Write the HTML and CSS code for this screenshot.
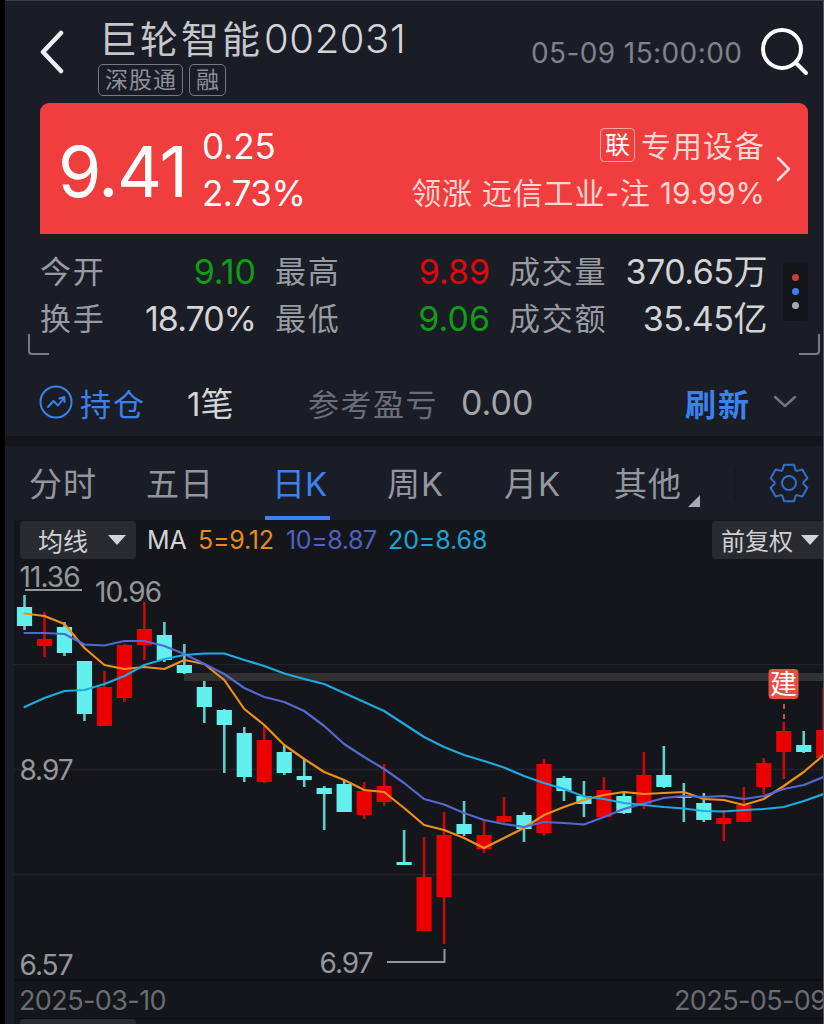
FILE: index.html
```
<!DOCTYPE html>
<html lang="zh-CN">
<head>
    <meta charset="UTF-8">
    <meta name="viewport" content="width=device-width, initial-scale=1.0">
    <title>巨轮智能 002031</title>
    <link rel="stylesheet" href="styles.css">
</head>
<body>
    <div class="app">
        <header class="top-bar">
            <svg class="back" width="26" height="44" viewBox="0 0 26 44"><path d="M22 3 L4 22 L22 41" /></svg>
            <div class="title">
                <h1>巨轮智能<span class="code">002031</span></h1>
                <div class="tags">
                    <span>深股通</span>
                    <span>融</span>
                </div>
            </div>
            <span class="time">05-09 15:00:00</span>
            <svg class="search" width="50" height="50" viewBox="0 0 50 50"><circle cx="22" cy="22" r="19" /><path d="M36 36 L46 46" /></svg>
        </header>

        <section class="price-card">
            <span class="price">9.41</span>
            <div class="change">
                <span>0.25</span>
                <span class="percent">2.73%</span>
            </div>
            <div class="sector">
                <div class="sector-name"><span class="link-tag">联</span><span>专用设备</span></div>
                <div class="leader">领涨 远信工业-注 <span class="leader-rate">19.99%</span></div>
            </div>
            <svg class="arrow" width="16" height="28" viewBox="0 0 16 28"><path d="M2 3 L13 14 L2 25" /></svg>
        </section>

        <section class="stats">
            <div class="grid">
                <div class="cell"><span>今开</span><b class="green">9.10</b></div>
                <div class="cell"><span>最高</span><b class="red">9.89</b></div>
                <div class="cell"><span>成交量</span><b class="tight">370.65万</b></div>
                <div class="cell"><span>换手</span><b class="tighter">18.70%</b></div>
                <div class="cell"><span>最低</span><b class="green">9.06</b></div>
                <div class="cell"><span>成交额</span><b class="tight">35.45亿</b></div>
            </div>
            <div class="dots"><i class="d1"></i><i class="d2"></i><i class="d3"></i></div>
        </section>
        <div class="corners"><i class="left"></i><i class="right"></i></div>

        <section class="position">
            <svg class="pos-icon" width="34" height="34" viewBox="0 0 34 34">
                <circle cx="17" cy="17" r="15.5" />
                <path d="M9 22 L14.5 16 L19 20.5 L25 13 M20.5 13.5 L25.3 12 L25.5 17" />
            </svg>
            <span class="hold">持仓</span>
            <span class="count">1笔</span>
            <span class="profit-label">参考盈亏</span>
            <span class="profit">0.00</span>
            <span class="refresh">刷新</span>
            <svg class="expand" width="24" height="14" viewBox="0 0 24 14"><path d="M2 2 L12 11 L22 2" /></svg>
        </section>

        <nav class="tabs">
            <span>分时</span>
            <span class="five">五日</span>
            <span class="active">日K</span>
            <span>周K</span>
            <span class="month">月K</span>
            <span class="more">其他</span>
            <svg class="corner-mark" width="12" height="12" viewBox="0 0 12 12"><path d="M12 0 V12 H0 Z" /></svg>
            <i class="sep"></i>
            <svg class="gear" width="40" height="40" viewBox="-20 -20 40 40">
                <path d="M-6.5 -13 L-5 -18.3 H5 L6.5 -13 Q7 -12.2 8 -12.1 L13.35 -13.5 L18.35 -4.8 L14.5 -.9 Q14 0 14.5 .9 L18.35 4.8 L13.35 13.5 L8 12.1 Q7 12.2 6.5 13 L5 18.3 H-5 L-6.5 13 Q-7 12.2 -8 12.1 L-13.35 13.5 L-18.35 4.8 L-14.5 .9 Q-14 0 -14.5 -.9 L-18.35 -4.8 L-13.35 -13.5 L-8 -12.1 Q-7 -12.2 -6.5 -13 Z" />
                <circle r="7" />
            </svg>
        </nav>

        <main class="panel">
            <div class="legend">
                <div class="select">均线<i class="caret"></i></div>
                <span class="ma">MA</span>
                <span class="ma5">5=9.12</span>
                <span class="ma10">10=8.87</span>
                <span class="ma20">20=8.68</span>
                <div class="select adjust">前复权<i class="caret"></i></div>
            </div>

            <svg class="chart" width="809" height="420" viewBox="14 559 809 420">
                <path class="grid-line" d="M14 664.5 H824 M14 769.5 H824 M14 874.5 H824" />
                <rect class="band" x="184" y="673" width="640" height="8" />
                <g class="labels">
                    <text x="19.5" y="587" textLength="61">11.36</text>
                    <text x="95" y="602" textLength="67">10.96</text>
                    <text x="19.5" y="780" textLength="54">8.97</text>
                    <text x="19.5" y="975" textLength="54">6.57</text>
                    <text x="319.5" y="973" textLength="54">6.97</text>
                </g>
                <path class="label-line" d="M25 590 H82 M387 962 H444.5 V949" />
                <g id="candles"></g>
                <polyline id="ma5" class="line line5" />
                <polyline id="ma10" class="line line10" />
                <polyline id="ma20" class="line line20" />
                <path class="mark-line" d="M784 704 V719" />
                <rect class="mark" x="768.5" y="669" width="30" height="30" rx="4" />
                <text class="mark-text" x="783.5" y="694" text-anchor="middle">建</text>
            </svg>

            <div class="dates">
                <span>2025-03-10</span>
                <span class="end">2025-05-09</span>
            </div>
            <div class="next"><div class="next-select"></div></div>
        </main>
    </div>

    <script>
        // body top, body bottom, wick top, wick bottom, up (1) or down (0)
        var days = [
            [607, 626, 595, 630, 0], [639, 646, 612, 657, 1], [627, 653, 622, 656, 0], [661, 714, 661, 721, 0],
            [687, 726, 671, 726, 1], [645, 698, 644, 702, 1], [629, 645, 602, 660, 1], [635, 660, 622, 662, 0],
            [665, 673, 644, 674, 0], [687, 707, 681, 723, 0], [710, 725, 709, 773, 0], [733, 777, 727, 782, 0],
            [740, 782, 726, 783, 1], [752, 773, 745, 775, 0], [776, 780, 759, 787, 0], [788, 794, 786, 830, 0],
            [784, 812, 780, 812, 0], [791, 815, 782, 819, 1], [786, 802, 764, 806, 1], [862, 865, 830, 865, 0],
            [877, 931, 837, 931, 1], [835, 897, 812, 944, 1], [824, 834, 801, 836, 0], [835, 849, 821, 853, 1],
            [816, 822, 797, 823, 1], [815, 829, 812, 842, 0], [764, 833, 759, 836, 1], [778, 791, 776, 801, 0],
            [796, 804, 781, 817, 0], [790, 817, 777, 817, 1], [796, 813, 793, 814, 0], [775, 804, 752, 809, 1],
            [775, 787, 746, 788, 0], [796, 798, 783, 822, 0], [803, 820, 793, 822, 0], [818, 824, 810, 841, 1],
            [805, 822, 787, 822, 1], [763, 787, 758, 794, 1], [731, 752, 722, 779, 1], [745, 752, 731, 753, 0],
            [730, 758, 688, 758, 1]
        ];
        var lines = {
            ma5: [613.5, 616, 624, 648, 665, 669, 667, 669, 660, 664, 680, 709, 725, 745, 759, 772, 780, 790, 792, 808, 825, 830, 838, 848, 838, 828, 815, 807, 800, 795, 792, 794, 793, 792, 799, 800, 805, 799, 786, 772, 755],
            ma10: [633, 633, 634, 644.5, 645.5, 641, 641, 646, 654, 664, 674, 688, 697, 702, 711, 726, 744, 757, 769, 783, 799, 804.5, 813, 820, 824, 827, 822, 823, 824.5, 817, 809, 803.5, 798, 796, 797, 796, 799, 796, 789, 785, 777],
            ma20: [707, 698, 691, 690, 684, 676, 665, 659, 655, 653.5, 653.5, 660, 666, 673.5, 679, 684, 693, 702, 711, 724, 737, 747, 755, 761, 767.5, 776, 783, 789, 796.5, 799, 803, 805, 807, 808.5, 811, 811.5, 810, 809, 807, 801, 794]
        };

        function dayX(i) {
            return 24.5 + i * 19.98;
        }

        var html = '';
        days.forEach(function (d, i) {
            var x = dayX(i);
            html += `<g class="${d[4] ? 'up' : 'down'}">
                <rect class="wick" x="${x - 1.3}" y="${d[2]}" width="2.6" height="${d[3] - d[2]}" />
                <rect x="${x - 7.6}" y="${d[0]}" width="15.2" height="${d[1] - d[0]}" />
            </g>`;
        });
        document.getElementById('candles').innerHTML = html;

        for (var id in lines) {
            var points = lines[id].map(function (y, i) {
                return dayX(i) + ',' + y;
            });
            document.getElementById(id).setAttribute('points', points.join(' '));
        }
    </script>
</body>
</html>
```
FILE: styles.css
```
* {
    box-sizing: border-box;
}

body {
    margin: 0;
    background-color: #000;
    font-family: Inter, "Noto Sans CJK SC", sans-serif;
    font-weight: 400;
    color: #d3d4d6;
    overflow: hidden;
}

svg {
    display: block;
    flex-shrink: 0;
    fill: none;
    stroke-linecap: round;
    stroke-linejoin: round;
}

span {
    white-space: nowrap;
}

.app {
    width: 819px;
    height: 1024px;
    margin-left: 5px;
    background-color: #1b1d26;
    border-top: 1px solid #3a3d45;
    border-right: 1px solid #55575e;
    overflow: hidden;
}

/* header */
.top-bar {
    display: flex;
    height: 102px;
    padding-left: 34px;
}

.back {
    margin-top: 29px;
    stroke: #eceef2;
    stroke-width: 4.5;
}

.title {
    width: 466px;
    padding: 13px 0 0 33px;
}

.title h1 {
    margin: 0;
    height: 50px;
    padding-left: 1px;
    line-height: 50px;
    font-size: 38px;
    font-weight: 400;
    letter-spacing: 3px;
    white-space: nowrap;
    color: #c6c7ca;
}

.title .code {
    margin-left: 1px;
    font-size: 40px;
    font-weight: 300;
    letter-spacing: 0.6px;
    color: #d3d4d6;
}

.tags {
    display: flex;
    gap: 6px;
}

.tags span {
    height: 32px;
    padding: 0 5px 0 6px;
    border: 1px solid #777a82;
    border-radius: 5px;
    line-height: 31px;
    font-size: 23px;
    letter-spacing: 1px;
    color: #8d9097;
}

.time {
    margin-top: 34px;
    line-height: 36px;
    font-size: 28px;
    letter-spacing: 0.4px;
    color: #7f828a;
}

.search {
    margin: 26px 13px 0 auto;
    stroke: #fff;
    stroke-width: 4;
}

/* red price card */
.price-card {
    display: flex;
    width: 768px;
    height: 131px;
    margin-left: 35px;
    background-color: #ef3e3d;
    border-radius: 9px 9px 0 0;
    color: #fff;
}

.price {
    width: 162px;
    padding-left: 18px;
    line-height: 137px;
    font-size: 70px;
    letter-spacing: -1.4px;
}

.change {
    display: flex;
    flex-direction: column;
    padding-top: 20px;
    line-height: 47px;
    font-size: 35px;
}

.percent {
    letter-spacing: -0.6px;
}

.sector {
    margin-left: auto;
    padding-top: 20px;
    text-align: right;
    font-size: 30px;
    letter-spacing: 1px;
    color: #ffd6d2;
}

.sector-name {
    display: flex;
    justify-content: flex-end;
    gap: 6px;
    height: 47px;
    line-height: 46px;
}

.link-tag {
    width: 35px;
    height: 34px;
    margin-top: 5px;
    border: 1px solid #f9a5a0;
    border-radius: 4px;
    line-height: 33px;
    text-align: center;
    font-size: 25px;
    letter-spacing: 0;
    color: #fff;
}

.leader {
    line-height: 46px;
    letter-spacing: 0.8px;
}

.leader-rate {
    letter-spacing: 0;
}

.arrow {
    margin: 52px 16px 0 11px;
    stroke: #ffe0dd;
    stroke-width: 2.5;
}

/* day stats */
.stats {
    display: flex;
    height: 93px;
    margin-top: 14px;
    padding-left: 35px;
}

.grid {
    display: grid;
    grid-template-columns: 216px 215px 258px;
    column-gap: 19px;
    grid-auto-rows: 47px;
}

.cell {
    display: flex;
    justify-content: space-between;
    line-height: 47px;
    font-size: 31px;
}

.cell span {
    letter-spacing: 1.7px;
    color: #999ba3;
}

.cell b {
    font-size: 34px;
    font-weight: 400;
}

.cell .tight {
    letter-spacing: -0.5px;
}

.cell .tighter {
    letter-spacing: -1px;
}

.cell .green {
    color: #0f9d14;
}

.cell .red {
    color: #e00808;
}

.dots {
    display: flex;
    flex-direction: column;
    align-items: center;
    justify-content: center;
    gap: 7px;
    width: 25px;
    height: 59px;
    margin: 14px 0 0 16px;
    background-color: #14151b;
    border-radius: 3px;
}

.dots i {
    width: 7px;
    height: 7px;
    border-radius: 50%;
}

.d1 { background-color: #c9402f; }
.d2 { background-color: #3b82f0; }
.d3 { background-color: #a9abb0; }

.corners {
    display: flex;
    justify-content: space-between;
    margin: -7px 3px 0 23px;
}

.corners i {
    width: 21px;
    height: 21px;
    border-bottom: 2px solid #777a81;
}

.corners .left {
    border-left: 2px solid #777a81;
    border-bottom-left-radius: 4px;
}

.corners .right {
    border-right: 2px solid #777a81;
    border-bottom-right-radius: 4px;
}

/* position row */
.position {
    display: flex;
    align-items: center;
    height: 81px;
    padding: 13px 0 0 34px;
    font-size: 31px;
}

.pos-icon {
    stroke: #3b82f0;
    stroke-width: 2;
    margin-right: 7px;
}

.hold {
    width: 107px;
    letter-spacing: 2px;
    color: #3b82f0;
}

.count {
    width: 121px;
    font-size: 33px;
}

.profit-label {
    width: 153px;
    letter-spacing: 1.5px;
    color: #6b6e76;
}

.profit {
    font-size: 34px;
    color: #a3a5a9;
}

.refresh {
    margin-left: auto;
    font-weight: 700;
    letter-spacing: 2px;
    color: #3b82f0;
}

.expand {
    margin: 0 26px 0 22px;
    stroke: #70737a;
    stroke-width: 2.5;
}

/* period tabs */
.tabs {
    display: flex;
    height: 84px;
    padding-left: 24px;
    border-top: 10px solid #13151a;
    line-height: 76px;
    font-size: 33px;
    letter-spacing: 0.9px;
    color: #94969e;
}

.tabs span {
    width: 117px;
}

.tabs .five {
    width: 120px;
}

.tabs .active {
    width: 65px;
    margin: 0 57px 0 -1px;
    padding-left: 7px;
    border-bottom: 4px solid #3b82f0;
    letter-spacing: 0;
    color: #3b82f0;
}

.tabs .month {
    width: 110px;
}

.tabs .more {
    width: 74px;
}

.corner-mark {
    margin-top: 49px;
    fill: #a9abb0;
}

.sep {
    width: 2px;
    height: 36px;
    margin: 20px 33px 0 34px;
    background-color: #171920;
}

.gear {
    margin-top: 17px;
    stroke: #3370cc;
    stroke-width: 2;
}

/* chart panel */
.panel {
    margin-left: 9px;
    background-color: #15161b;
}

.legend {
    display: flex;
    align-items: center;
    height: 39px;
    padding-left: 6px;
    font-size: 25px;
}

.select {
    display: flex;
    align-items: center;
    width: 116px;
    height: 38px;
    padding-left: 18px;
    background-color: #2a2b30;
    border-radius: 4px;
    color: #cfd0d2;
}

.caret {
    margin-left: 20px;
    border: 9px solid transparent;
    border-top: 10px solid #d3d4d6;
    border-bottom: 0;
}

.adjust {
    width: 111px;
    margin-left: auto;
    padding-left: 9px;
    border-radius: 4px 0 0 4px;
    font-size: 24px;
}

.adjust .caret {
    margin-left: 8px;
}

.ma { width: 51px; margin-left: 11px; }
.ma5 { width: 88px; color: #e58a1c; letter-spacing: -0.2px; }
.ma10 { width: 102px; color: #4f62c0; letter-spacing: -0.4px; }
.ma20 { color: #1fa2d2; letter-spacing: -0.1px; }

.chart {
    overflow: visible;
}

.grid-line {
    stroke: #1f2226;
    stroke-width: 1.5;
}

.band {
    fill: #313130;
}

.labels {
    fill: #96979b;
    font-size: 28px;
}

.label-line {
    stroke: #96979b;
    stroke-width: 2;
    stroke-linecap: butt;
}

.up { fill: #ea0000; }
.down { fill: #62f0ee; }
.up .wick { fill: #c60a0a; }
.down .wick { fill: #60cfc8; }

.line {
    stroke-width: 2.2;
}

.line5 { stroke: #ee8f1c; }
.line10 { stroke: #5468cf; }
.line20 { stroke: #1fa9e2; }

.mark {
    fill: #e2503f;
}

.mark-line {
    stroke: #c9513f;
    stroke-width: 2;
    stroke-linecap: butt;
    stroke-dasharray: 5 5;
}

.mark-text {
    fill: #fff;
    font-size: 27px;
}

.dates {
    display: flex;
    justify-content: space-between;
    height: 40px;
    padding-left: 5px;
    border-top: 2px solid #0d0e12;
    border-bottom: 1px solid #0d0e12;
    line-height: 40px;
    font-size: 27px;
    letter-spacing: -0.6px;
    color: #6b6c70;
}

.dates .end {
    width: 149px;
}

.next {
    padding-left: 6px;
}

.next-select {
    width: 116px;
    height: 38px;
    background-color: #2a2b30;
    border-radius: 4px;
}
```
